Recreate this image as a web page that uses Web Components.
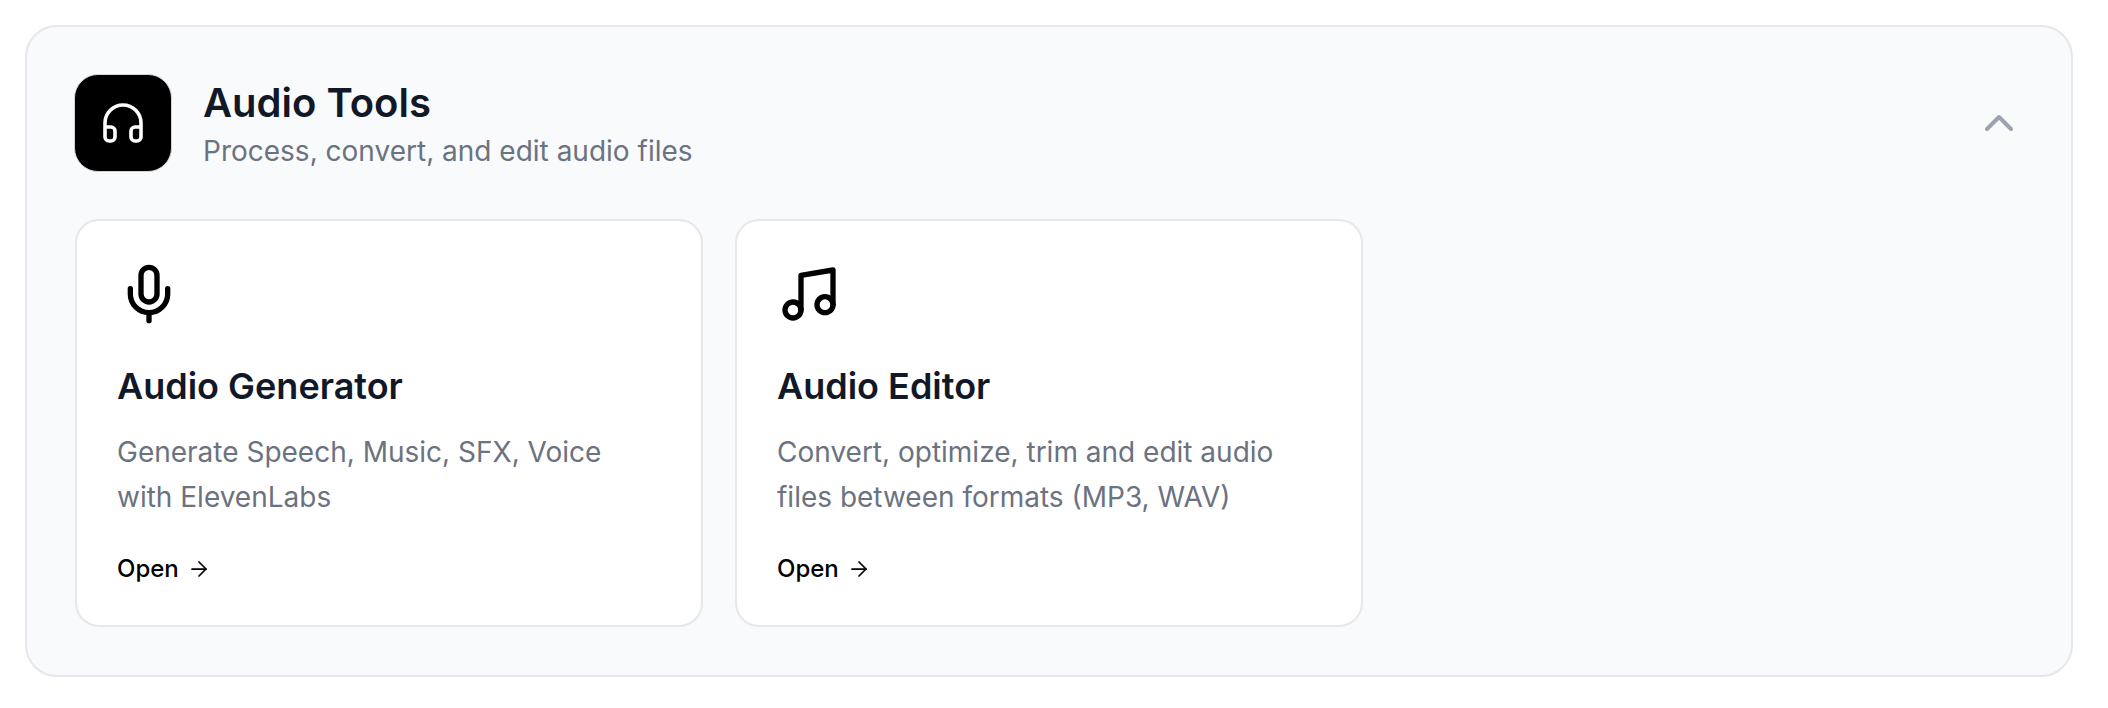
<!DOCTYPE html>
<html><head><meta charset="utf-8"><style>
html,body{margin:0;background:#fff}
body{padding:25px 34px 0 25px;font-family:Inter,"Liberation Sans",sans-serif}
</style></head><body>
<tool-section heading="Audio Tools" sub="Process, convert, and edit audio files">
<svg slot="icon" viewBox="0 0 24 24" width="48" height="48" fill="none" stroke="#fff" stroke-width="1.8" stroke-linecap="round" stroke-linejoin="round"><path d="M3 14h3a2 2 0 0 1 2 2v3a2 2 0 0 1-2 2H5a2 2 0 0 1-2-2v-7a9 9 0 0 1 18 0v7a2 2 0 0 1-2 2h-1a2 2 0 0 1-2-2v-3a2 2 0 0 1 2-2h3"/></svg>
<tool-card heading="Audio Generator" desc="Generate Speech, Music, SFX, Voice with ElevenLabs">
<svg slot="icon" viewBox="0 0 24 24" width="64" height="64" fill="none" stroke="#000" stroke-width="2" stroke-linecap="round" stroke-linejoin="round"><path d="M12 2a3 3 0 0 0-3 3v7a3 3 0 0 0 6 0V5a3 3 0 0 0-3-3Z"/><path d="M19 10v2a7 7 0 0 1-14 0v-2"/><path d="M12 19v3"/></svg>
</tool-card>
<tool-card heading="Audio Editor" desc="Convert, optimize, trim and edit audio files between formats (MP3, WAV)">
<svg slot="icon" viewBox="0 0 24 24" width="64" height="64" fill="none" stroke="#000" stroke-width="2" stroke-linecap="round" stroke-linejoin="round"><path d="M9 18V5l12-2v13"/><circle cx="6" cy="18" r="3"/><circle cx="18" cy="16" r="3"/></svg>
</tool-card>
</tool-section>
<script>
class ToolSection extends HTMLElement{
 constructor(){super();const s=this.attachShadow({mode:'open'});
 s.innerHTML=`<style>
 :host{display:block;box-sizing:border-box;width:2048px;height:652px;background:#f9fafb;border:2px solid #e5e7eb;border-radius:32px;padding:47px 48px 48px 47px}
 header{display:flex;align-items:center;height:98px;gap:30px;margin-bottom:47px}
 .ic{box-sizing:border-box;width:98px;height:98px;background:#000;border:1px solid #d1d5db;border-radius:24px;display:flex;align-items:center;justify-content:center;flex:none}
 .t{flex:1;min-width:0;padding:5px 0 0 1px;align-self:flex-start}
 h2{margin:0;font:600 40px/48px Inter,sans-serif;color:#111827}
 p{margin:4px 0 0;font:400 28px/40px Inter,sans-serif;color:#6b7280}
 .chev{flex:none}
 .grid{display:grid;grid-template-columns:repeat(3,628px);gap:32px;margin-left:1px}
 </style>
 <header><div class="ic"><slot name="icon"></slot></div><div class="t"><h2>${this.getAttribute('heading')}</h2><p>${this.getAttribute('sub')}</p></div>
 <svg class="chev" viewBox="0 0 24 24" width="48" height="48" fill="none" stroke="#9ca3af" stroke-width="2" stroke-linecap="round" stroke-linejoin="round"><path d="m18 15-6-6-6 6"/></svg></header>
 <div class="grid"><slot></slot></div>`}
}
class ToolCard extends HTMLElement{
 constructor(){super();const s=this.attachShadow({mode:'open'});
 s.innerHTML=`<style>
 :host{display:block;box-sizing:border-box;height:408px;background:#fff;border:2px solid #e5e7eb;border-radius:24px;padding:41px 40px 40px}
 .i{height:64px}
 h3{margin:38px 0 0;font:600 36px/44px Inter,sans-serif;color:#111827}
 p{margin:22px 0 0;font:400 28px/45px Inter,sans-serif;color:#6b7280}
 a{display:flex;align-items:center;gap:8px;margin-top:33px;font:500 24px/32px Inter,sans-serif;color:#000}
 </style>
 <div class="i"><slot name="icon"></slot></div><h3>${this.getAttribute('heading')}</h3><p>${this.getAttribute('desc')}</p>
 <a>Open <svg viewBox="0 0 24 24" width="24" height="24" fill="none" stroke="#000" stroke-width="1.75" stroke-linecap="round" stroke-linejoin="round"><path d="M5 12h14"/><path d="m12 5 7 7-7 7"/></svg></a>`}
}
customElements.define('tool-section',ToolSection);customElements.define('tool-card',ToolCard);
</script></body></html>
